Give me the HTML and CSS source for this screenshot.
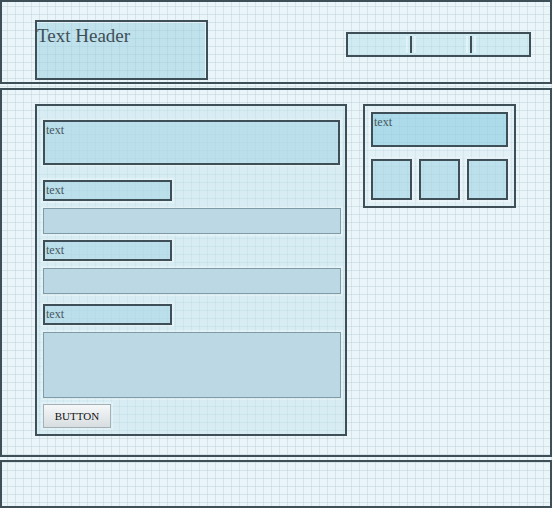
FILE: index.html
```html
<!DOCTYPE html>
<html>
<head>
<meta charset="utf-8">
<link rel="stylesheet" href="styles.css">
</head>
<body>
<div class="page">
  <header class="header">
    <div class="title-box">Text Header</div>
    <nav class="nav">
      <span class="nav-item n1"></span>
      <span class="nav-div"></span>
      <span class="nav-item n2"></span>
      <span class="nav-div"></span>
      <span class="nav-item n3"></span>
    </nav>
  </header>
  <main class="main">
    <section class="card">
      <div class="textbox">text</div>
      <div class="label l1">text</div>
      <div class="input i1"></div>
      <div class="label l2">text</div>
      <div class="input i2"></div>
      <div class="label l3">text</div>
      <div class="textarea"></div>
      <button class="button">BUTTON</button>
    </section>
    <aside class="panel">
      <div class="panel-text">text</div>
      <div class="squares">
        <div class="square"></div>
        <div class="square"></div>
        <div class="square"></div>
      </div>
    </aside>
  </main>
  <footer class="footer"></footer>
</div>
</body>
</html>
```

FILE: styles.css
```css
html, body {
  margin: 0;
  padding: 0;
}
body {
  width: 552px;
  height: 508px;
  overflow: hidden;
  background-color: #eaf5f9;
  background-image:
    repeating-linear-gradient(90deg, transparent 0 7px, rgba(180, 200, 208, 0.38) 7px 8px),
    repeating-linear-gradient(180deg, transparent 0 6px, rgba(180, 200, 208, 0.38) 6px 7px, transparent 7px 8px);
  font-family: "Liberation Serif", "Times New Roman", serif;
  color: #3f4f57;
}
.page {
  display: flex;
  flex-direction: column;
}
.header {
  box-sizing: border-box;
  height: 84px;
  border: 2px solid #3f4f57;
  display: flex;
  justify-content: space-between;
  align-items: flex-start;
  padding: 18px 19px 0 33px;
}
.title-box {
  box-sizing: border-box;
  width: 173px;
  height: 60px;
  border: 2px solid #3f4f57;
  background: rgba(150, 207, 223, 0.5);
  box-shadow: inset -1px 1px 0 rgba(255, 255, 255, 0.6);
  font-size: 19px;
  line-height: 22px;
  padding: 3px 0 0 0;
  color: #3f4f57;
}
.nav {
  box-sizing: border-box;
  margin-top: 12px;
  width: 185px;
  height: 25px;
  border: 2px solid #3f4f57;
  background: rgba(180, 225, 235, 0.45);
  display: grid;
  grid-template-columns: 62px 2px 58px 2px 57px;
  align-items: center;
}
.nav-div {
  height: 17px;
  background: #3f4f57;
  box-shadow: -4px 0 0 0 rgba(240, 250, 253, 0.55), 4px 0 0 0 rgba(240, 250, 253, 0.55);
}
.main {
  box-sizing: border-box;
  margin-top: 4px;
  height: 369px;
  border: 2px solid #3f4f57;
  padding: 14px 0 0 33px;
  display: flex;
  align-items: flex-start;
  gap: 16px;
}
.card {
  box-sizing: border-box;
  width: 312px;
  height: 332px;
  border: 2px solid #3f4f57;
  background: rgba(196, 229, 238, 0.5);
  padding: 14px 4px 0 6px;
  display: flex;
  flex-direction: column;
  align-items: flex-start;
}
.textbox, .label, .panel-text {
  box-sizing: border-box;
  border: 2px solid #3f4f57;
  background: rgba(160, 212, 228, 0.5);
  box-shadow: 0 0 0 2px rgba(255, 255, 255, 0.3);
  font-size: 12px;
  line-height: 14px;
  padding: 1px 0 0 1px;
  color: #46565d;
}
.textbox {
  width: 297px;
  height: 45px;
  margin-bottom: 15px;
}
.label {
  width: 129px;
  height: 21px;
}
.input, .textarea {
  box-sizing: border-box;
  width: 298px;
  border: 1px solid #7e9ba6;
  background: #bcd8e4;
  box-shadow: 0 0 0 2px rgba(255, 255, 255, 0.3);
}
.input {
  height: 26px;
}
.i1 { margin-top: 7px; }
.l2 { margin-top: 6px; }
.i2 { margin-top: 7px; }
.l3 { margin-top: 10px; }
.textarea {
  margin-top: 7px;
  height: 66px;
}
.button {
  margin-top: 6px;
  box-sizing: border-box;
  width: 68px;
  height: 24px;
  border: 1px solid #a3b1b7;
  background: linear-gradient(#f6f8f9, #d7dde0);
  box-shadow: 0 0 0 2px rgba(255, 255, 255, 0.3);
  font-family: "Liberation Serif", "Times New Roman", serif;
  font-size: 11px;
  color: #111;
  padding: 0;
}
.panel {
  box-sizing: border-box;
  width: 153px;
  height: 104px;
  border: 2px solid #3f4f57;
  background: rgba(215, 236, 243, 0.4);
  padding: 6px;
  display: flex;
  flex-direction: column;
  gap: 12px;
}
.panel-text {
  width: 137px;
  height: 36px;
  background: rgba(130, 200, 222, 0.55);
}
.squares {
  display: flex;
  gap: 7px;
}
.square {
  box-sizing: border-box;
  width: 41px;
  height: 41px;
  border: 2px solid #3f4f57;
  background: rgba(150, 207, 225, 0.5);
  box-shadow: 0 0 0 2px rgba(255, 255, 255, 0.3);
}
.footer {
  box-sizing: border-box;
  margin-top: 3px;
  height: 48px;
  border: 2px solid #3f4f57;
}
```
